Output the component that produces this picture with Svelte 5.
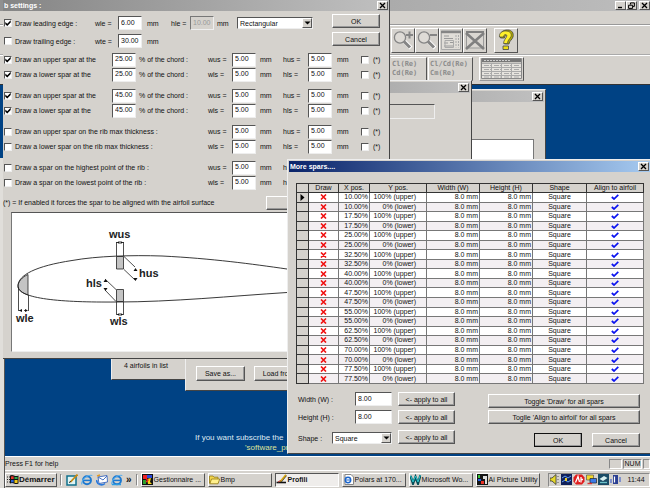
<script>
  const groups = [
    [
      { text: 'Draw an upper spar at the', on: true, pct: '25.00', side: 'us' },
      { text: 'Draw a lower spar at the', on: true, pct: '25.00', side: 'ls' }
    ],
    [
      { text: 'Draw an upper spar at the', on: true, pct: '45.00', side: 'us' },
      { text: 'Draw a lower spar at the', on: true, pct: '45.00', side: 'ls' }
    ],
    [
      { text: 'Draw an upper spar on the rib max thickness :', on: false, side: 'us' },
      { text: 'Draw a lower spar on the rib max thickness :', on: false, side: 'ls' }
    ],
    [
      { text: 'Draw a spar on the highest point of the rib :', on: false, side: 'us', short: true },
      { text: 'Draw a spar on the lowest point of the rib :', on: false, side: 'ls', short: true }
    ]
  ];

  const positions = ['10.00%', '17.50%', '25.00%', '32.50%', '40.00%', '47.50%', '55.00%', '62.50%', '70.00%', '77.50%'];
  const spars = positions.flatMap((x) => [
    { x, y: '100% (upper)' },
    { x, y: '0% (lower)' }
  ]);

  const tasks = [
    { icon: 'manager', text: 'Gestionnaire ...' },
    { icon: 'folder', text: 'Bmp' },
    { icon: 'pen', text: 'Profili', active: true },
    { icon: 'page', text: 'Polars at 170...' },
    { icon: 'works', text: 'Microsoft Wo...' },
    { icon: 'picture', text: 'Ai Picture Utility' }
  ];
</script>

{#snippet closeButton()}
  <button class="cap" aria-label="Close">
    <svg width="7" height="7" viewBox="0 0 7 7"><path d="M1 1L6 6M6 1L1 6" stroke="#000" stroke-width="1.3" /></svg>
  </button>
{/snippet}

{#snippet arrow()}
  <span class="drop"><svg width="7" height="4" viewBox="0 0 7 4"><path d="M0.5 0.5H6.5L3.5 3.5Z" fill="#000" /></svg></span>
{/snippet}

{#snippet globe()}
  <circle cx="6" cy="6.3" r="4" fill="none" stroke="#1c78d0" stroke-width="1.9" />
  <path d="M2.5 6.4H9.6" stroke="#1c78d0" stroke-width="1.5" />
  <path d="M1 10.4C-.8 6.5 7-.2 11.3 1.6" fill="none" stroke="#5ab0ee" stroke-width="1.1" />
{/snippet}

<div class="screen">
  <header class="apptitle">
    <button class="cap" aria-label="Minimize"><svg width="7" height="7" viewBox="0 0 7 7"><path d="M1 5.5H5" stroke="#000" stroke-width="1.4" /></svg></button>
    <button class="cap" aria-label="Restore"><svg width="7" height="7" viewBox="0 0 7 7"><path d="M2.5 2.5V.9H6.4V4.4H5M.6 3.2H4.6V6.4H.6Z" fill="none" stroke="#000" /></svg></button>
    <span class="gap"></span>
    {@render closeButton()}
  </header>
  <div class="menubar"></div>
  <div class="band first">
    <button class="tool" aria-label="Zoom in">
      <svg width="22" height="22" viewBox="0 0 22 22"><path d="M12 12L19 19" stroke="#fff" stroke-width="4" /><circle cx="8" cy="8.5" r="5.6" fill="#dedbd6" stroke="#858585" stroke-width="1.3" /><path d="M12 12.5L18 18.5" stroke="#858585" stroke-width="3" /><path d="M14 6H21M17.5 2.5V9.5" stroke="#858585" stroke-width="2" /></svg>
    </button>
    <button class="tool" aria-label="Zoom out">
      <svg width="22" height="22" viewBox="0 0 22 22"><path d="M12 12L19 19" stroke="#fff" stroke-width="4" /><circle cx="8" cy="8.5" r="5.6" fill="#dedbd6" stroke="#858585" stroke-width="1.3" /><path d="M12 12.5L18 18.5" stroke="#858585" stroke-width="3" /><path d="M14 6H21" stroke="#858585" stroke-width="2" /></svg>
    </button>
    <button class="tool" aria-label="Details">
      <svg width="22" height="22" viewBox="0 0 22 22"><path d="M1.5 2H20.5V20.5H1.5Z" fill="#e0ddd8" stroke="#aaa" /><path d="M1 3H21" stroke="#858585" stroke-width="2.4" /><path d="M4 7H9M4 9.5H13M4 14H8M4 17H13M10 13.5H13" stroke="#999" /><path d="M16 6V18.5M18.5 6V18.5" stroke="#aaa" stroke-dasharray="2 1" /><path d="M5 11.5H13.5V18.5H5Z" fill="none" stroke="#aaa" /></svg>
    </button>
    <button class="tool" aria-label="Delete">
      <svg width="22" height="22" viewBox="0 0 22 22"><path d="M2.5 3H19.5V19H2.5Z" fill="#dad7d2" stroke="#999" /><path d="M2 3H20" stroke="#808080" stroke-width="2" /><path d="M2 4L20 20M20 4L2 20" stroke="#808080" stroke-width="2.6" /></svg>
    </button>
    <button class="tool help" aria-label="Help">
      <svg width="22" height="22" viewBox="0 0 22 22"><path d="M5.500 9C4 3 8.500 1 12.500 1C17 1 19 4 18 8C17 11 14.500 11.500 14 15H9.500C9.500 11.500 13 10 13.500 7.500C13.800 5.500 10 5 9.500 9Z" fill="#b5ad00" stroke="#444" stroke-width=".8" /><path d="M4.500 8C4 4 7 2 10.500 2C15 2 17 4.500 16 7.500C15 10 12.500 11 12.500 14.500H8.500C8.500 11 11.500 9 11.800 7C12 5 8.500 5 8.500 8Z" fill="#fff02a" stroke="#444" stroke-width=".7" /><path d="M8 17H13.500V20.500H8Z" fill="#eedf10" stroke="#444" stroke-width=".8" /></svg>
    </button>
  </div>
  <div class="band second">
    <button class="wide">Cl(Re)<br />Cd(Re)</button>
    <button class="wide">Cl/Cd(Re)<br />Cm(Re)</button>
    <button class="wide data" aria-label="Polar data">
      <svg width="41" height="21" viewBox="0 0 41 21"><path d="M.5.5H40.5V20.5H.5Z" fill="#e6e3de" stroke="#888" /><path d="M1 2.5H40" stroke="#777" stroke-width="3.4" /><path d="M3 2.5H29" stroke="#ccc" stroke-dasharray="2 1" /><path d="M1 5.5H40M1 9.5H40M1 13.5H40M1 17.5H40M10.5 5V20M20.5 5V20M30.5 5V20" stroke="#aaa" /><path d="M3 7.5H39M3 11.5H39M3 15.5H39M3 19H39" stroke="#aaa" stroke-dasharray="5 1 1 3" /></svg>
    </button>
  </div>

  <main class="desk">
    <p>If you want subscribe the<br /><a href="#list">'software_pr</a></p>
  </main>

  <footer class="status"><span>Press F1 for help</span><i></i><i>NUM</i><i></i></footer>

  <nav class="taskbar">
    <button class="start">
      <svg width="12" height="11" viewBox="0 0 12 11"><path d="M0 3H3M0 5.5H3M0 8H3" stroke="#222" stroke-dasharray="1 1" /><path d="M3 1.5Q5 .3 7 1.5T11.5 1.5V9.5Q9 10.5 7 9.5T3 9.5Z" fill="#111" /><path d="M4 2.5Q5.5 1.8 6.7 2.5V5H4Z" fill="#e6332a" /><path d="M7.5 2.8Q9 3.3 10.6 2.7V5H7.5Z" fill="#2ba84a" /><path d="M4 6H6.7V8.6Q5.5 8 4 8.6Z" fill="#2a62d8" /><path d="M7.5 6H10.6V8.7Q9 9.2 7.5 8.7Z" fill="#f3c91b" /></svg>
      Démarrer
    </button>
    <span class="sep"></span>
    <div class="quick">
      <button aria-label="Show desktop"><svg width="12" height="12" viewBox="0 0 12 12"><path d="M1 2H10V11H1Z" fill="#dff4f4" stroke="#11708c" stroke-width="1.5" /><path d="M11.5 .5L4.5 8" stroke="#c78a12" stroke-width="1.8" /><path d="M3 8.5L5 7.5" stroke="#222" /></svg></button>
      <button aria-label="Internet Explorer"><svg width="12" height="12" viewBox="0 0 12 12">{@render globe()}</svg></button>
      <button aria-label="Outlook Express"><svg width="12" height="12" viewBox="0 0 12 12"><path d="M2 3L11 1.5L11.5 8L3 9.5Z" fill="#fff" stroke="#4a72c0" /><path d="M2 3L7 6L11 2" fill="none" stroke="#4a72c0" /><path d="M.5 6C1 11 6 12 9 9.5" fill="none" stroke="#2979dd" stroke-width="1.6" /><path d="M1 2L4 1" stroke="#e49a22" stroke-width="1.4" /></svg></button>
      <button aria-label="Browser"><svg width="12" height="12" viewBox="0 0 12 12">{@render globe()}<path d="M1 10.5H10" stroke="#2c9be0" stroke-width="1.5" /></svg></button>
      <button class="more" aria-label="More">»</button>
    </div>
    <span class="sep"></span>
    {#each tasks as task}
      <button class="task" class:active={task.active}>
        <svg width="11" height="11" viewBox="0 0 11 11">
          {#if task.icon === 'manager'}
            <path d="M0 0H11V11H0Z" fill="#111" /><path d="M1 1H5V5H1Z" fill="#e22" /><path d="M5 1H10V4H5Z" fill="#2a48d8" /><path d="M1 6H4V10H1Z" fill="#2ba02b" /><path d="M5 5L9 4L8 8L10 10H6Z" fill="#f5d414" /><path d="M3 4L6 6L4 8" fill="none" stroke="#e22" stroke-width="1.4" />
          {:else if task.icon === 'folder'}
            <path d="M.5 2H4L5 3.2H9V9H.5Z" fill="#f2d54c" stroke="#937a14" stroke-width=".8" /><path d="M2.5 5H10.7L9 9.8H.8Z" fill="#fff08c" stroke="#937a14" stroke-width=".8" />
          {:else if task.icon === 'pen'}
            <path d="M10 .8L4 8" stroke="#d6a50c" stroke-width="1.8" /><path d="M10.6 1.6L5 8.5" stroke="#222" stroke-width=".7" /><path d="M.5 8.5H10" stroke="#111" stroke-width="1.6" /><path d="M2 8L4.5 6.5" stroke="#b33" />
          {:else if task.icon === 'page'}
            <path d="M2 .5H8L10.5 3V10.5H2Z" fill="#fff" stroke="#888" /><circle cx="5" cy="6" r="2.7" fill="none" stroke="#1c66cc" stroke-width="1.5" /><path d="M3 6H7.5" stroke="#1c66cc" />
          {:else if task.icon === 'works'}
            <path d="M.5 2L3 9.5L5.5 3L8 9.5L10.5 1" fill="none" stroke="#064f5a" stroke-width="2.4" /><path d="M.5 1.5L3 8L5.5 2L8 8L10.3 1" fill="none" stroke="#2ec4cc" stroke-width="1" />
          {:else}
            <path d="M0 0H11V11H0Z" fill="#151515" /><path d="M1 1H3V4H1Z" fill="#3ac43a" /><path d="M6 2H10V10H8V5H6Z" fill="#ddd" /><path d="M1 5H4V7H1Z" fill="#2a62e8" /><path d="M4 7H7V10H4Z" fill="#e83226" />
          {/if}
        </svg>
        {task.text}
      </button>
    {/each}
    <div class="tray">
      <svg width="10" height="11" viewBox="0 0 10 11"><path d="M0 4H2L6 .5V10.5L2 7H0Z" fill="#e6d829" stroke="#333" stroke-width=".8" /><path d="M8 2V9" stroke="#555" stroke-dasharray="1 2" /></svg>
      <svg width="11" height="11" viewBox="0 0 11 11"><path d="M0 0H11V11H0Z" fill="#10205a" /><path d="M1 4L4 2L7 4L10 2M1 8L4 6L7 8L10 6" fill="none" stroke="#62a0f4" /><path d="M5 4V7" stroke="#eed02c" stroke-width="2" /></svg>
      <svg width="12" height="11" viewBox="0 0 12 11"><path d="M3 .5H9L11.5 3.5V7.5L9 10.5H3L.5 7.5V3.5Z" fill="#e01c1c" /><path d="M2.5 8.5L5 2.5L6.5 8M8 3V8.500M8 5.500H10" fill="none" stroke="#fff" stroke-width="1.3" /></svg>
      <svg width="11" height="11" viewBox="0 0 11 11"><path d="M.5 1H7.5V6H.5Z" fill="#f3d92c" stroke="#555" stroke-width=".7" /><path d="M4 4.5H10.5V9H4Z" fill="#3d7be8" stroke="#222" stroke-width=".7" /><path d="M1.5 9.5H6" stroke="#d33" stroke-width="1.4" /></svg>
      <svg width="11" height="11" viewBox="0 0 11 11"><path d="M0 0H11V11H0Z" fill="#1b4c66" /><path d="M1.5 5L6 2L9.5 4L5 7Z" fill="#d9f0f0" /><path d="M2 8.5H9" stroke="#6dc2c9" stroke-width="1.3" /></svg>
      <svg width="11" height="11" viewBox="0 0 11 11"><path d="M3 1H8V10H3Z" fill="#2b3f92" /><path d="M4.5 2.5V8.5" stroke="#fff" stroke-width="1.2" /><path d="M1 5V9M10 3V8" stroke="#5a74cc" stroke-width="1.4" /></svg>
      <time>11:44</time>
    </div>
  </nav>

  <div class="sliver"></div>

  <section class="window list"><p>4 airfoils in list</p></section>

  <section class="window loader">
    <div class="title dull">{@render closeButton()}</div>
    <div class="sheet"></div>
    <div class="pair"><button class="push">Save as...</button><button class="push">Load from</button></div>
  </section>

  <section class="window inner">
    <div class="title dull">{@render closeButton()}</div>
    <div class="etched"></div>
  </section>

  <section class="window settings">
    <div class="title dull"><h2>b settings :</h2>{@render closeButton()}</div>
    <div class="edges">
      <div class="lines">
        <div class="edge">
          <input type="checkbox" id="le" checked /><label for="le">Draw leading edge :</label>
          <label for="wle">wle =</label><input type="text" id="wle" value="6.00" /><span>mm</span>
          <label for="hle">hle =</label><input type="text" id="hle" value="10.00" disabled /><span>mm</span>
          <div class="combo"><select aria-label="Leading edge shape"><option>Rectangular</option></select>{@render arrow()}</div>
        </div>
        <div class="edge">
          <input type="checkbox" id="te" /><label for="te">Draw trailing edge :</label>
          <label for="wte">wte =</label><input type="text" id="wte" value="30.00" /><span>mm</span>
        </div>
      </div>
      <div class="confirm"><button class="push">OK</button><button class="push">Cancel</button></div>
    </div>
    <div class="groups">
      {#each groups as group, g}
        <div class="group">
          {#each group as row, r}
            {@const id = `s${g}${r}`}
            <div class="spar">
              <input type="checkbox" {id} checked={row.on} />
              <label for={id} class:long={!row.pct}>{row.text}</label>
              {#if row.pct}
                <input type="text" id="{id}p" value={row.pct} /><label for="{id}p">% of the chord :</label>
              {/if}
              <label for="{id}w">w{row.side} =</label><input type="text" id="{id}w" value="5.00" /><span>mm</span>
              {#if row.short}
                <span>h</span>
              {:else}
                <label for="{id}h">h{row.side} =</label><input type="text" id="{id}h" value="5.00" /><span>mm</span>
                <input type="checkbox" id="{id}f" /><label for="{id}f">(*)</label>
              {/if}
            </div>
          {/each}
        </div>
      {/each}
    </div>
    <div class="note"><span>(*) = If enabled it forces the spar to be aligned with the airfoil surface</span><button class="push" aria-label="More spars"></button></div>
    <div class="drawing">
      <svg width="366" height="138" viewBox="0 0 366 138">
        <g fill="#c4c4c4" stroke="#222" stroke-width=".8">
          <path d="M16 61.5C10 64 6 69 6 73C6 77 10 80 16 82Z" />
          <path d="M104.5 43.5H111.5V56H104.5Z" /><path d="M104.5 76.5H111.5V88.5H104.5Z" />
        </g>
        <path d="M6 73C6 62 24 53 60 47.500C85 43 120 42 150 43C200 45.500 240 51 275 56C310 61 340 66 360 70C330 74 300 78 275 79.500C220 83 160 89 104 89C50 89.500 6 86 6 73Z" fill="none" stroke="#222" stroke-width=".9" />
        <g fill="none" stroke="#222" stroke-width=".8">
          <path d="M104.500 29V43M111.500 29V43M104.500 89V101M111.500 89V101M6.500 74V98M16.500 82V98" />
          <path d="M112 43.500L123 54M112 56.500L123 67M104 76.500L93 66M104 88.500L93 77" />
          <path d="M7 97.500H16M104 29.500H112M104 101.500H112" stroke-dasharray="3 2" />
        </g>
        <g fill="#111">
          <path d="M7 97.500L10 96V99ZM16 97.500L13 96V99Z" />
          <path d="M105 29.500L107.500 28V31ZM111 29.500L108.500 28V31ZM105 101.500L107.500 100V103ZM111 101.500L108.500 100V103Z" />
          <path d="M123.500 55L121.500 58H125.500ZM123.500 68L121.500 65H125.500ZM93.500 66L91.500 69H95.500ZM93.500 78L91.500 75H95.500Z" />
        </g>
        <text x="97" y="25">wus</text><text x="127" y="64">hus</text><text x="74" y="74">hls</text>
        <text x="4" y="109">wle</text><text x="98" y="112">wls</text>
      </svg>
    </div>
  </section>

  <section class="window more">
    <div class="title"><h2>More spars....</h2>{@render closeButton()}</div>
    <div class="body">
      <table>
        <colgroup><col class="c0" /><col class="c1" /><col class="c2" /><col class="c3" /><col class="c4" /><col class="c4" /><col class="c5" /><col class="c6" /></colgroup>
        <thead><tr><th></th><th>Draw</th><th>X pos.</th><th>Y pos.</th><th>Width (W)</th><th>Height (H)</th><th>Shape</th><th>Align to airfoil</th></tr></thead>
        <tbody>
          {#each spars as spar, i}
            <tr>
              <td class="head">{#if i === 0}<svg width="5" height="7" viewBox="0 0 5 7"><path d="M.5 0L4.500 3.500L.5 7Z" fill="#000" /></svg>{/if}</td>
              <td><svg width="7" height="6" viewBox="0 0 7 6"><path d="M1 .5L6 5.500M6 .5L1 5.500" stroke="#f01010" stroke-width="1.600" /></svg></td>
              <td class="num">{spar.x}</td>
              <td class="num y">{spar.y}</td>
              <td class="num">8.0 mm</td>
              <td class="num">8.0 mm</td>
              <td>Square</td>
              <td><svg width="8" height="6" viewBox="0 0 8 6"><path d="M.8 3L3 5L7.300 .8" fill="none" stroke="#0c14f0" stroke-width="1.700" /></svg></td>
            </tr>
          {/each}
        </tbody>
      </table>
      <div class="controls">
        <div class="fields">
          <label for="mw">Width (W) :</label><input type="text" id="mw" value="8.00" /><button class="push">&lt;- apply to all</button>
          <label for="mh">Height (H) :</label><input type="text" id="mh" value="8.00" /><button class="push">&lt;- apply to all</button>
          <div class="shape"><label for="ms">Shape :</label><div class="combo"><select id="ms"><option>Square</option></select>{@render arrow()}</div></div><button class="push">&lt;- apply to all</button>
        </div>
        <div class="actions">
          <button class="push">Toggle 'Draw' for all spars</button>
          <button class="push">Toglle 'Align to airfoil' for all spars</button>
          <div class="end"><button class="push default">OK</button><button class="push">Cancel</button></div>
        </div>
      </div>
    </div>
  </section>
</div>

<style>
  :global(body) { margin: 0; background: #004284; }
  * { box-sizing: border-box; }
  .screen { position: relative; display: flex; flex-direction: column; min-height: 100vh; overflow: hidden; font: 7px/9px "Liberation Sans", Arial, sans-serif; color: #111; background: #d5d2cd; }
  button, input, select { font: inherit; color: inherit; margin: 0; padding: 0; border-radius: 0; }
  svg { display: block; flex: none; }
  p, h2 { margin: 0; }
  button { background: #d5d2cd; border: 1px solid; border-color: #fff #555 #555 #fff; white-space: nowrap; }

  .cap { display: flex; align-items: center; justify-content: center; width: 11px; height: 9px; flex: none; }
  .push { height: 14px; box-shadow: inset -1px -1px #999; }
  .default { outline: 1px solid #111; outline-offset: -1px; }

  input[type='text'] { width: 24px; height: 14px; padding: 0 0 2px 2px; background: #fff; border: 1px solid; border-color: #555 #eee #eee #555; }
  input[type='text']:disabled { background: #d5d2cd; color: #999; border-color: #777 #eee #eee #777; }
  input[type='checkbox'] { appearance: none; width: 8px; height: 8px; background: #fff; border: 1px solid; border-color: #555 #eee #eee #555; }
  input[type='checkbox']:checked::before { content: ''; display: block; width: 6px; height: 6px; background: #000; clip-path: polygon(5% 35%, 38% 62%, 95% 5%, 95% 42%, 38% 98%, 5% 70%); }

  .combo { display: grid; align-items: center; }
  .combo select { grid-area: 1 / 1; width: 100%; height: 12px; appearance: none; padding-left: 2px; background: #fff; border: 1px solid; border-color: #555 #eee #eee #555; }
  .drop { grid-area: 1 / 1; justify-self: end; display: flex; align-items: center; justify-content: center; width: 10px; height: 10px; margin-right: 1px; background: #d5d2cd; border: 1px solid; border-color: #fff #555 #555 #fff; pointer-events: none; }

  .apptitle { display: flex; align-items: center; justify-content: flex-end; height: 11px; background: linear-gradient(90deg, #909090, #bdbdbd); }
  .apptitle .gap { width: 2px; }
  .menubar { height: 14px; border-bottom: 1px solid #999; }
  .band { display: flex; align-items: center; border-top: 1px solid #fff; padding-left: 391px; }
  .first { height: 29px; }
  .second { height: 30px; padding-bottom: 2px; border-top-color: #aaa; box-shadow: inset 0 1px #fff; }
  .tool { display: flex; align-items: center; justify-content: center; width: 24px; height: 25px; }
  .help { margin-left: 7px; }
  .wide { width: 45px; height: 24px; margin-right: 1px; font: bold 7px/9px "DejaVu Sans Mono", monospace; color: #8c8c8c; border-color: #fff #555 #999 #fff; text-align: left; padding-left: 1px; }
  .wide:first-child { width: 36px; border-left: 0; }
  .data { display: flex; align-items: center; justify-content: center; margin-left: 5px; padding: 0; }

  .desk { flex: 1; border-top: 1px solid #333; background: #004284; padding: 348px 0 0 195px; font-size: 8px; line-height: 10px; color: #dfe9f2; }
  .desk p { width: 92px; white-space: nowrap; }
  .desk a { margin-left: 50px; color: #dfe39a; text-decoration: none; }

  .status { display: flex; align-items: center; height: 14px; padding: 0 0 0 5px; gap: 1px; border-top: 1px solid #fff; }
  .status span { flex: 1; }
  .status i { width: 13px; height: 10px; font-style: normal; text-align: center; border: 1px solid; border-color: #888 #fff #fff #888; line-height: 8px; }
  .status i:nth-of-type(2) { width: 19px; }
  .status i:nth-of-type(3) { width: 7px; }

  .taskbar { display: flex; align-items: center; gap: 3px; height: 18px; padding-left: 5px; border-top: 1px solid #fff; }
  .taskbar button { display: flex; align-items: center; gap: 1px; height: 14px; }
  .taskbar .start { width: 52px; font-weight: bold; font-size: 8px; padding-left: 1px; gap: 0; }
  .sep { width: 2px; height: 12px; border: 1px solid; border-color: #888 #fff #fff #888; }
  .quick { display: flex; gap: 3px; padding: 0 1px; }
  .taskbar .quick button { border: 0; background: none; }
  .taskbar .quick .more { font: bold 10px/10px "Liberation Sans", sans-serif; }
  .task { flex: 0 0 64px; }
  .taskbar .active { background: #efedeb; font-weight: bold; border-color: #555 #fff #fff #555; }
  .tray { display: flex; flex: 1; align-items: center; gap: 1px; height: 14px; margin-left: 5px; padding-left: 1px; border: 1px solid; border-color: #888 #fff #fff #888; }
  .tray time { margin-left: 6px; }

  .window { position: absolute; background: #d5d2cd; border: 1px solid; border-color: #eee #444 #444 #eee; }
  .sliver { position: absolute; left: 0; top: 158px; bottom: 0; width: 5px; background: #e0deda; border-right: 1px solid #555; }
  .title { display: flex; align-items: center; justify-content: space-between; height: 11px; padding: 0 1px 0 1px; color: #fff; background: linear-gradient(90deg, #0a246a, #a6caf0); }
  .title.dull { background: linear-gradient(90deg, #858585, #c0c0c0); }
  .title h2 { flex: 1; font-size: 7px; line-height: 9px; }
  .title .cap { margin-left: auto; }
  .list { left: 111px; top: 250px; width: 180px; height: 130px; display: flex; align-items: flex-end; padding: 0 0 9px 12px; }
  .loader { left: 185px; top: 89px; width: 361px; height: 302px; padding: 1px; display: flex; flex-direction: column; }
  .sheet { flex: 1; margin: 37px 10px 14px; background: #fff; border: 1px solid #777; }
  .pair { display: flex; gap: 9px; padding: 0 9px 8px; }
  .pair .push { width: 49px; height: 15px; }
  .inner { left: 200px; top: 80px; width: 272px; height: 200px; padding: 1px; }
  .etched { height: 15px; margin: 11px 35px 0 20px; border: 1px solid; border-color: #555 #eee #eee #555; }

  .settings { left: 3px; top: 0; width: 387px; height: 359px; border-top: 0; border-left: 0; }
  .edges { display: flex; justify-content: space-between; padding: 3px 9px 0 1px; }
  .edge { display: grid; grid-template-columns: 11px 80px 23px 29px 24px 19px 27px 20px 76px; align-items: center; height: 18px; }
  .confirm { display: flex; flex-direction: column; gap: 4px; width: 48px; }
  .groups { display: flex; flex-direction: column; gap: 6px; padding: 2px 0 0 1px; }
  .spar { display: grid; grid-template-columns: 11px 97px 27px 69px 24px 28px 23px 25px 29px 24px 12px 1fr; align-items: center; height: 15px; white-space: nowrap; }
  .long { grid-column: span 3; }
  .note { display: flex; justify-content: space-between; align-items: center; margin-top: 5px; height: 15px; padding-right: 9px; }
  .note .push { width: 114px; }
  .drawing { margin: 2px 9px 0 8px; background: #fff; border: 1px solid; border-color: #555 #eee #eee #777; overflow: hidden; }
  .drawing text { font: bold 11px "Liberation Sans", Arial, sans-serif; fill: #222; }

  .window.more { left: 287px; right: 0; top: 159px; height: 295px; border-right: 0; padding: 1px 0 0 1px; }
  .body { padding: 11px 7px 0; }
  table { width: 100%; height: 201px; table-layout: fixed; border-collapse: collapse; border: 1px solid #222; line-height: 8px; }
  .c0 { width: 12px; } .c1 { width: 30px; } .c2 { width: 31px; } .c3 { width: 57px; }
  .c4 { width: 53px; } .c5 { width: 54px; } .c6 { width: 57px; }
  th, td { padding: 0; border: 1px solid #777; text-align: center; font-weight: normal; white-space: nowrap; }
  th, td.head { background: #d5d2cd; border-color: #333; }
  td { background: #fff; }
  tr:nth-child(even) td:not(.head) { background: #f3eff2; }
  td svg { margin: 0 auto; }
  td.num { text-align: right; padding-right: 1px; }
  td.num.y { padding-right: 10px; }
  .controls { display: flex; justify-content: space-between; align-items: flex-start; padding: 8px 3px 0 2px; }
  .fields { display: grid; grid-template-columns: 57px 37px 63px; grid-template-rows: 14px 14px 16px; row-gap: 4px; align-items: end; }
  .fields > .push { margin-left: 6px; width: 57px; }
  .fields > label { align-self: center; }
  .fields input[type='text'] { width: 37px; }
  .shape { grid-column: span 2; display: grid; grid-template-columns: 34px 60px; align-items: center; }
  .actions { display: flex; flex-direction: column; gap: 2px; width: 152px; padding-top: 2px; }
  .end { display: flex; justify-content: flex-end; gap: 10px; padding-top: 7px; }
  .end .push { width: 48px; }
</style>
